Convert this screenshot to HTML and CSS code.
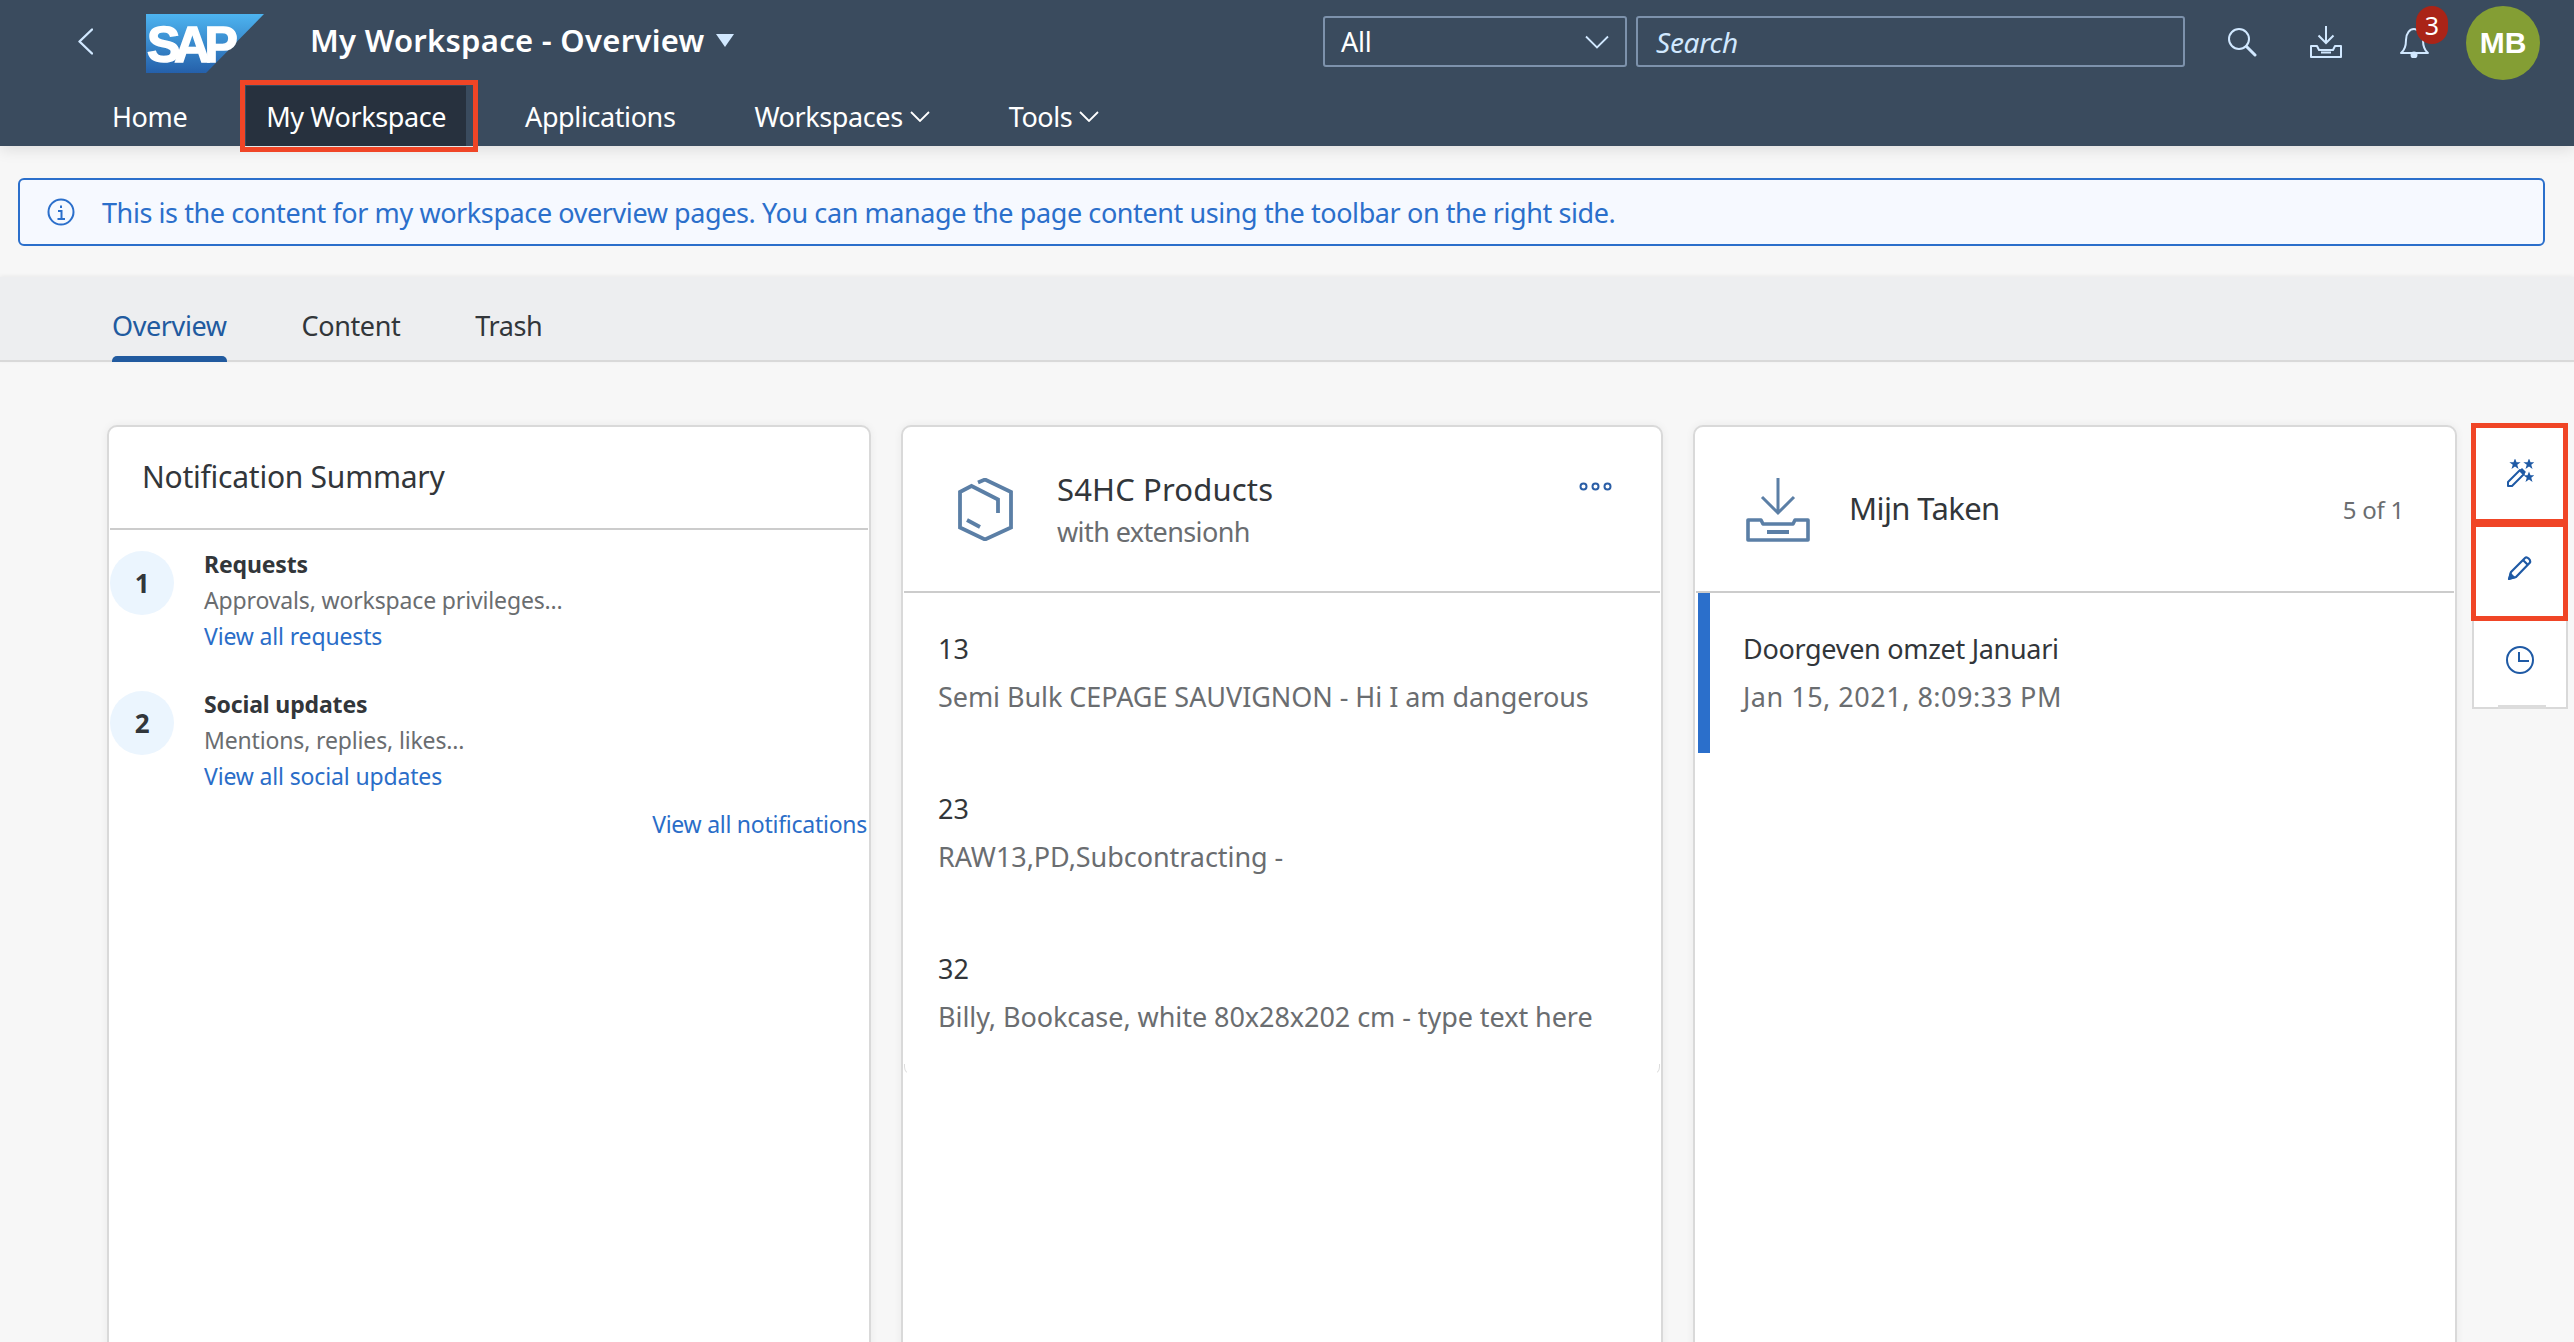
FILE: index.html
```html
<!DOCTYPE html>
<html lang="en">
<head>
<meta charset="utf-8">
<title>My Workspace - Overview</title>
<link rel="stylesheet" href="styles.css">
</head>
<body>
<header class="shell">
  <div class="shell-top">
    <svg class="back" width="15" height="27" viewBox="0 0 15 27"><path d="M14 1.5 1.5 13.5 14 25.5" fill="none" stroke="#d1e8ff" stroke-width="2.4" stroke-linecap="round" stroke-linejoin="round"/></svg>
    <svg class="logo" width="118" height="59" viewBox="0 0 118 59">
      <defs><linearGradient id="sapg" x1="0" y1="0" x2="0" y2="1"><stop offset="0" stop-color="#4db4f0"/><stop offset="1" stop-color="#2560aa"/></linearGradient></defs>
      <polygon points="0,0 118,0 60,59 0,59" fill="url(#sapg)"/>
      <text class="logo-text" x="1" y="48">SAP</text>
    </svg>
    <div class="app-title">My Workspace - Overview<span class="title-caret"></span></div>
    <div class="search-group">
      <div class="scope">All
        <svg width="24" height="14" viewBox="0 0 24 14"><path d="M1 1.5 12 12.5 23 1.5" fill="none" stroke="#d1e8ff" stroke-width="1.8"/></svg>
      </div>
      <div class="search">Search</div>
    </div>
    <svg class="act act-search" width="30" height="30" viewBox="0 0 30 30"><circle cx="12" cy="12" r="10" fill="none" stroke="#d1e8ff" stroke-width="2"/><path d="M19.5 19.5 28 28" stroke="#d1e8ff" stroke-width="3" stroke-linecap="round"/></svg>
    <svg class="act act-dl" width="32" height="32" viewBox="0 0 32 32"><path d="M16 0V16M8.500 9.500 16 17 23.500 9.500" fill="none" stroke="#d1e8ff" stroke-width="2"/><path d="M7 20H1V31H31V20H25L23 24H9Z" fill="none" stroke="#d1e8ff" stroke-width="2" stroke-linejoin="round"/><path d="M11 26.500H21" stroke="#d1e8ff" stroke-width="2"/></svg>
    <div class="bell-wrap">
      <svg width="30" height="32" viewBox="0 0 30 32"><path d="M1 27C5 24 6 20 6 14 6 7 10 3 14 3S23 7 23 14C23 20 24 24 28 27Z" fill="none" stroke="#d1e8ff" stroke-width="2" stroke-linejoin="round"/><circle cx="14" cy="29" r="3.500" fill="#d1e8ff"/></svg>
      <span class="badge">3</span>
    </div>
    <div class="avatar">MB</div>
  </div>
  <nav class="nav">
    <a class="nav-item">Home</a>
    <a class="nav-item nav-current">My Workspace</a>
    <a class="nav-item">Applications</a>
    <a class="nav-item">Workspaces<svg width="20" height="11" viewBox="0 0 20 11"><path d="M1 1 10 10 19 1" fill="none" stroke="#fff" stroke-width="1.800"/></svg></a>
    <a class="nav-item">Tools<svg width="20" height="11" viewBox="0 0 20 11"><path d="M1 1 10 10 19 1" fill="none" stroke="#fff" stroke-width="1.800"/></svg></a>
  </nav>
</header>

<div class="notice">
  <svg width="28" height="28" viewBox="0 0 28 28"><circle cx="14" cy="14" r="12.500" fill="none" stroke="#2b6fcb" stroke-width="2"/><path d="M14 7.500V10M11 13H14.500V21M10.500 21H18" fill="none" stroke="#2b6fcb" stroke-width="2"/></svg>
  <span>This is the content for my workspace overview pages. You can manage the page content using the toolbar on the right side.</span>
</div>

<div class="tabs">
  <a class="tab tab-active">Overview</a>
  <a class="tab">Content</a>
  <a class="tab">Trash</a>
</div>

<main class="content">
  <section class="card">
    <div class="note-head">Notification Summary</div>
    <div class="note-row">
      <div class="num">1</div>
      <div class="note-text">
        <strong>Requests</strong>
        <span>Approvals, workspace privileges...</span>
        <a>View all requests</a>
      </div>
    </div>
    <div class="note-row">
      <div class="num">2</div>
      <div class="note-text">
        <strong>Social updates</strong>
        <span>Mentions, replies, likes...</span>
        <a>View all social updates</a>
      </div>
    </div>
    <a class="note-all">View all notifications</a>
  </section>

  <section class="card">
    <div class="card-head">
      <svg class="hex" width="55" height="63" viewBox="0 0 55 63"><path d="M20 4.500 27 1.500 53 14V49.500L27 61.500 2 49.500V14L13.500 8 40 21.500V35M9 42 22 49" fill="none" stroke="#5b7fa6" stroke-width="3.800"/></svg>
      <div class="head-text">
        <div class="head-title">S4HC Products</div>
        <div class="head-sub">with extensionh</div>
      </div>
      <svg class="dots" width="33" height="9" viewBox="0 0 33 9"><circle cx="4.500" cy="4.500" r="3" fill="none" stroke="#2a5ea6" stroke-width="2"/><circle cx="16.500" cy="4.500" r="3" fill="none" stroke="#2a5ea6" stroke-width="2"/><circle cx="28.500" cy="4.500" r="3" fill="none" stroke="#2a5ea6" stroke-width="2"/></svg>
    </div>
    <ul class="items">
      <li><b>13</b><span>Semi Bulk CEPAGE SAUVIGNON - Hi I am dangerous</span></li>
      <li><b>23</b><span>RAW13,PD,Subcontracting -</span></li>
      <li><b>32</b><span>Billy, Bookcase, white 80x28x202 cm - type text here</span></li>
    </ul>
  </section>

  <section class="card">
    <div class="card-head head-tasks">
      <svg class="tray" width="64" height="64" viewBox="0 0 64 64"><path d="M32 0V35M16 19 32 35 48 19" fill="none" stroke="#5b7fa6" stroke-width="3"/><path d="M15 42H2V62H62V42H49L47 46H17Z" fill="none" stroke="#5b7fa6" stroke-width="3.600" stroke-linejoin="round"/><path d="M21 54H43" stroke="#5b7fa6" stroke-width="4"/></svg>
      <div class="task-title">Mijn Taken</div>
      <div class="task-count">5 of 1</div>
    </div>
    <div class="task">
      <div class="task-name">Doorgeven omzet Januari</div>
      <div class="task-date">Jan 15, 2021, 8:09:33 PM</div>
    </div>
  </section>

  <aside class="tools">
    <div class="tool tool-first">
      <svg width="28" height="28" viewBox="0 0 28 28">
        <path d="M2 23 14 11 18 15 6 27 2 27Z" fill="none" stroke="#1f5aa5" stroke-width="2" stroke-linejoin="round"/>
        <path d="M13 12 16 9 20 13 17 16Z" fill="#1f5aa5"/>
        <polygon class="star" transform="translate(9 5) scale(1.25)" points="0,-4.500 1.200,-1.500 4.500,-1.500 1.800,.6 2.800,4 0,2 -2.800,4 -1.800,.6 -4.500,-1.500 -1.200,-1.500"/>
        <polygon class="star" transform="translate(23 5) scale(1.25)" points="0,-4.500 1.200,-1.500 4.500,-1.500 1.800,.6 2.800,4 0,2 -2.800,4 -1.800,.6 -4.500,-1.500 -1.200,-1.500"/>
        <polygon class="star" transform="translate(23 18) scale(1.25)" points="0,-4.500 1.200,-1.500 4.500,-1.500 1.800,.6 2.800,4 0,2 -2.800,4 -1.800,.6 -4.500,-1.500 -1.200,-1.500"/>
      </svg>
    </div>
    <div class="tool tool-second">
      <svg width="26" height="26" viewBox="0 0 26 26"><path d="M2 24 4 17 18 3C20 1 24 5 23 7.500L9 22Z" fill="none" stroke="#1f5aa5" stroke-width="2.200" stroke-linejoin="round"/><path d="M1 25 3 17 9 23Z" fill="#1f5aa5"/><path d="M16 5 21 10" stroke="#1f5aa5" stroke-width="2.200"/></svg>
    </div>
    <div class="tool">
      <svg width="30" height="30" viewBox="0 0 30 30"><circle cx="15" cy="15" r="13" fill="none" stroke="#1f5aa5" stroke-width="2"/><path d="M14 7V16H24" fill="none" stroke="#1f5aa5" stroke-width="2"/></svg>
    </div>
    <div class="scroll-hint"></div>
    <div class="mark mark-one"></div>
    <div class="mark mark-two"></div>
  </aside>
</main>
</body>
</html>
```
FILE: styles.css
```css
* { box-sizing: border-box; }
html, body { margin: 0; height: 100%; }
body {
  height: 1342px;
  overflow: hidden;
  background: #f7f7f7;
  font-family: "Noto Sans", "Open Sans", sans-serif;
  color: #32363a;
  letter-spacing: -0.26px;
}
a { text-decoration: none; }

.shell { height: 146px; background: #3a4b5e; color: #fff; box-shadow: 0 4px 14px rgba(0,0,0,.1); position: relative; }
.shell-top { height: 86px; display: flex; align-items: flex-start; padding-left: 78px; }
.back { margin-top: 28px; }
.logo { margin: 14px 0 0 53px; }
.logo-text { font: bold 50px "Liberation Sans", sans-serif; fill: #fff; stroke: #fff; stroke-width: 1.5px; letter-spacing: -6px; }
.app-title { margin: 17px 0 0 46px; font-size: 31px; line-height: 46px; font-weight: 600; letter-spacing: 0.28px; display: flex; align-items: center; }
.title-caret { width: 0; height: 0; margin-left: 11px; border: 9px solid transparent; border-top: 13px solid #d1e8ff; border-bottom: 0; }
.search-group { display: flex; gap: 9px; margin: 16px 0 0 auto; position: absolute; left: 1323px; }
.scope, .search { height: 51px; border: 2px solid #7d92ac; border-radius: 3px; display: flex; align-items: center; font-size: 27px; }
.scope { width: 304px; padding: 0 16px; justify-content: space-between; color: #fff; }
.search { width: 549px; padding: 0 18px; font-size: 28px; font-style: italic; color: #d1e8ff; }
.act { position: absolute; }
.act-search { left: 2227px; top: 27px; }
.act-dl { left: 2310px; top: 26px; }
.bell-wrap { position: absolute; left: 2400px; top: 26px; }
.badge { position: absolute; left: 16px; top: -20px; width: 32px; height: 38px; border-radius: 16px; background: #aa2417; color: #fff; text-align: center; font-size: 25px; line-height: 38px; letter-spacing: 0; }
.avatar { position: absolute; left: 2466px; top: 6px; width: 74px; height: 74px; border-radius: 50%; background: #849e34; color: #fff; font: bold 30px/74px "Liberation Sans", sans-serif; text-align: center; letter-spacing: 0; }

.nav { height: 60px; display: flex; padding-left: 92px; gap: 39px; position: relative; }
.nav-item { height: 60px; padding: 0 20px; display: flex; align-items: center; font-size: 27px; letter-spacing: -0.4px; color: #fff; gap: 7px; }
.nav-current { background: #27313e; position: relative; }
.nav-current::after { content: ""; position: absolute; top: -6px; left: -6px; right: -12px; bottom: -6px; border: 5px solid #f04526; }

.notice { margin: 32px 29px 0 18px; height: 68px; border: 2px solid #2b6fcb; border-radius: 6px; background: #f6f9ff; display: flex; align-items: center; gap: 27px; padding-left: 27px; color: #2b6fcb; font-size: 27px; letter-spacing: -0.41px; }

.tabs { margin-top: 31px; height: 85px; padding: 0 112px; background: #edeef0; border-bottom: 2px solid #d9d9d9; display: flex; gap: 75px; align-items: stretch; box-shadow: 0 -1px 4px rgba(0,0,0,.06); }
.tab { font-size: 27px; letter-spacing: -0.4px; display: flex; align-items: center; padding-top: 14px; color: #32363a; position: relative; }
.tab-active { color: #215a9f; }
.tab-active::after { content: ""; position: absolute; left: 0; right: 0; bottom: -2px; height: 6px; background: #215a9f; border-radius: 5px 5px 0 0; }

.content { display: flex; padding: 63px 0 0 107px; gap: 30px; align-items: flex-start; position: relative; }
.card { width: 764px; height: 940px; flex: none; background: #fff; border: 2px solid #d9d9d9; border-radius: 10px; box-shadow: 0 0 8px rgba(0,0,0,.06); padding: 0 1px; }
.card + .card { width: 762px; }
.card + .card + .card { width: 764px; }

.note-head { height: 103px; border-bottom: 2px solid #ccc; padding: 26px 0 0 32px; font-size: 30px; letter-spacing: -0.25px; line-height: 48px; color: #32363a; }
.note-row { display: flex; margin-top: 21px; height: 119px; gap: 30px; }
.num { width: 64px; height: 64px; border-radius: 50%; background: #ebf5fe; display: flex; align-items: center; justify-content: center; font-size: 26px; font-weight: 700; }
.note-text { display: flex; flex-direction: column; font-size: 23px; letter-spacing: -0.15px; line-height: 36px; margin-top: -5px; }
.note-text strong { font-weight: 700; }
.note-text span { color: #6a6d70; }
.note-text a, .note-all { color: #2a6dc8; }
.note-all { display: block; margin-top: -4px; padding-right: 1px; text-align: right; font-size: 23px; line-height: 36px; }

.card-head { height: 166px; border-bottom: 2px solid #ccc; display: flex; padding: 0 0 0 54px; position: relative; }
.hex { margin-top: 51px; flex: none; }
.head-text { margin: 40px 0 0 44px; }
.head-title { font-size: 31px; letter-spacing: 0.15px; line-height: 44px; }
.head-sub { font-size: 27px; letter-spacing: -0.6px; line-height: 42px; color: #6a6d70; }
.dots { position: absolute; right: 48px; top: 55px; }
.items { list-style: none; margin: 0; padding: 0 0 0 34px; height: 482px; position: relative; }
.items::after { content: ""; position: absolute; left: 0; right: 0; bottom: 0; height: 10px; border: 1px solid transparent; border-left-color: #ddd; border-right-color: #ddd; border-top: 0; border-radius: 0 0 8px 8px; }
.items li { height: 160px; padding-top: 32px; display: flex; flex-direction: column; font-size: 27px; letter-spacing: -0.06px; line-height: 48px; color: #6a6d70; }
.items b { font-weight: 400; color: #32363a; }

.head-tasks { padding-left: 50px; align-items: center; }
.tray { flex: none; margin-top: 2px; }
.task-title { margin-left: 39px; font-size: 31px; letter-spacing: -0.6px; margin-top: -2px; }
.task-count { margin-left: auto; margin-right: 50px; font-size: 24px; color: #6a6d70; }
.task { height: 160px; border-left: 12px solid #2b6fcb; margin-left: 2px; padding: 32px 0 0 33px; font-size: 27px; line-height: 48px; }
.task-name { letter-spacing: -0.3px; }
.task-date { color: #6a6d70; letter-spacing: 0.5px; }

.tools { width: 96px; flex: none; margin: 0 0 0 -15px; background: #fff; border: 2px solid #d9d9d9; border-top: 0; position: relative; height: 284px; }
.tool { height: 90px; display: flex; align-items: center; justify-content: center; }
.tool-first { height: 96px; }
.tool-second { height: 94px; }
.scroll-hint { position: absolute; left: 24px; bottom: -2px; width: 48px; height: 4px; background: #dcdcdc; }
.mark { position: absolute; left: -3px; right: -2px; border: 5px solid #f04526; }
.mark-one { top: -2px; height: 104px; }
.mark-two { top: 94px; height: 102px; }
.star { fill: #1f5aa5; }
```
